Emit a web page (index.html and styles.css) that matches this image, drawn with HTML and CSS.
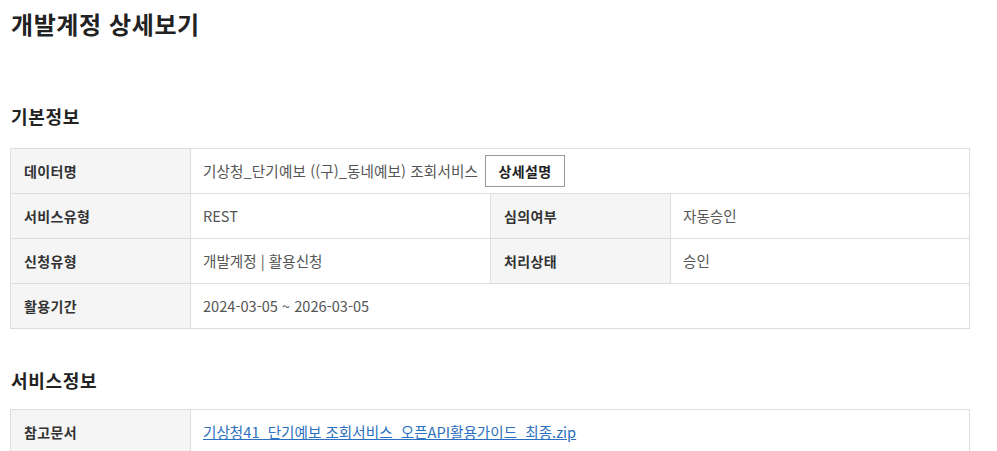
FILE: index.html
```html
<!DOCTYPE html>
<html lang="ko">
<head>
<meta charset="utf-8">
<title>개발계정 상세보기</title>
<link rel="stylesheet" href="styles.css">
</head>
<body>
<div class="page">
  <h1 class="page-title">개발계정 상세보기</h1>

  <h2 class="section-title first">기본정보</h2>
  <table class="info">
    <colgroup>
      <col class="c-th"><col class="c-td"><col class="c-th"><col class="c-td2">
    </colgroup>
    <tr>
      <th>데이터명</th>
      <td colspan="3"><span class="data-name">기상청_단기예보 ((구)_동네예보) 조회서비스</span><button class="btn">상세설명</button></td>
    </tr>
    <tr>
      <th>서비스유형</th>
      <td>REST</td>
      <th>심의여부</th>
      <td>자동승인</td>
    </tr>
    <tr>
      <th>신청유형</th>
      <td>개발계정 | 활용신청</td>
      <th>처리상태</th>
      <td>승인</td>
    </tr>
    <tr>
      <th>활용기간</th>
      <td colspan="3">2024-03-05 ~ 2026-03-05</td>
    </tr>
  </table>

  <h2 class="section-title second">서비스정보</h2>
  <table class="info">
    <colgroup>
      <col class="c-th"><col>
    </colgroup>
    <tr>
      <th>참고문서</th>
      <td><a class="file-link" href="#">기상청41_단기예보 조회서비스_오픈API활용가이드_최종.zip</a></td>
    </tr>
  </table>
</div>
</body>
</html>
```

FILE: styles.css
```css
* { box-sizing: border-box; }
html, body { margin: 0; padding: 0; background: #fff; }
body {
  font-family: "Noto Sans CJK KR", "Noto Sans", sans-serif;
  color: #333;
}
.page {
  padding: 0 28px 0 10px;
}
.page-title {
  margin: 0;
  padding-top: 6px;
  padding-left: 1px;
  font-size: 24px;
  line-height: 36px;
  font-weight: 700;
  letter-spacing: 0.6px;
  color: #222;
}
.section-title {
  margin: 0;
  padding-left: 1px;
  font-size: 18px;
  line-height: 28px;
  font-weight: 700;
  letter-spacing: 0.7px;
  color: #222;
}
.section-title.first { margin-top: 60px; margin-bottom: 18px; }
.section-title.second { margin-top: 37px; margin-bottom: 15px; }
.info {
  width: 960px;
  border-collapse: collapse;
  table-layout: fixed;
  border: 1px solid #ddd;
  font-size: 14px;
}
.c-th { width: 180px; }
.c-td { width: 300px; }
.info th, .info td {
  border: 1px solid #ddd;
  height: 45px;
  padding: 0 12px;
  text-align: left;
  vertical-align: middle;
  line-height: 20px;
}
.info th {
  background: #f5f5f5;
  font-weight: 700;
  color: #333;
  padding-left: 13px;
  letter-spacing: 0.4px;
}
.info td {
  color: #555;
  font-weight: 400;
  font-size: 14.6px;
}
.btn {
  display: inline-block;
  vertical-align: middle;
  margin-left: 7px;
  width: 80px;
  height: 32px;
  border: 1px solid #999;
  background: #fff;
  font-family: inherit;
  font-size: 14px;
  font-weight: 700;
  letter-spacing: 0.4px;
  color: #222;
  padding: 0;
  cursor: pointer;
}
.data-name { vertical-align: middle; letter-spacing: 0.1px; }
.file-link {
  color: #2a6fc0;
  text-decoration: underline;
}
```
